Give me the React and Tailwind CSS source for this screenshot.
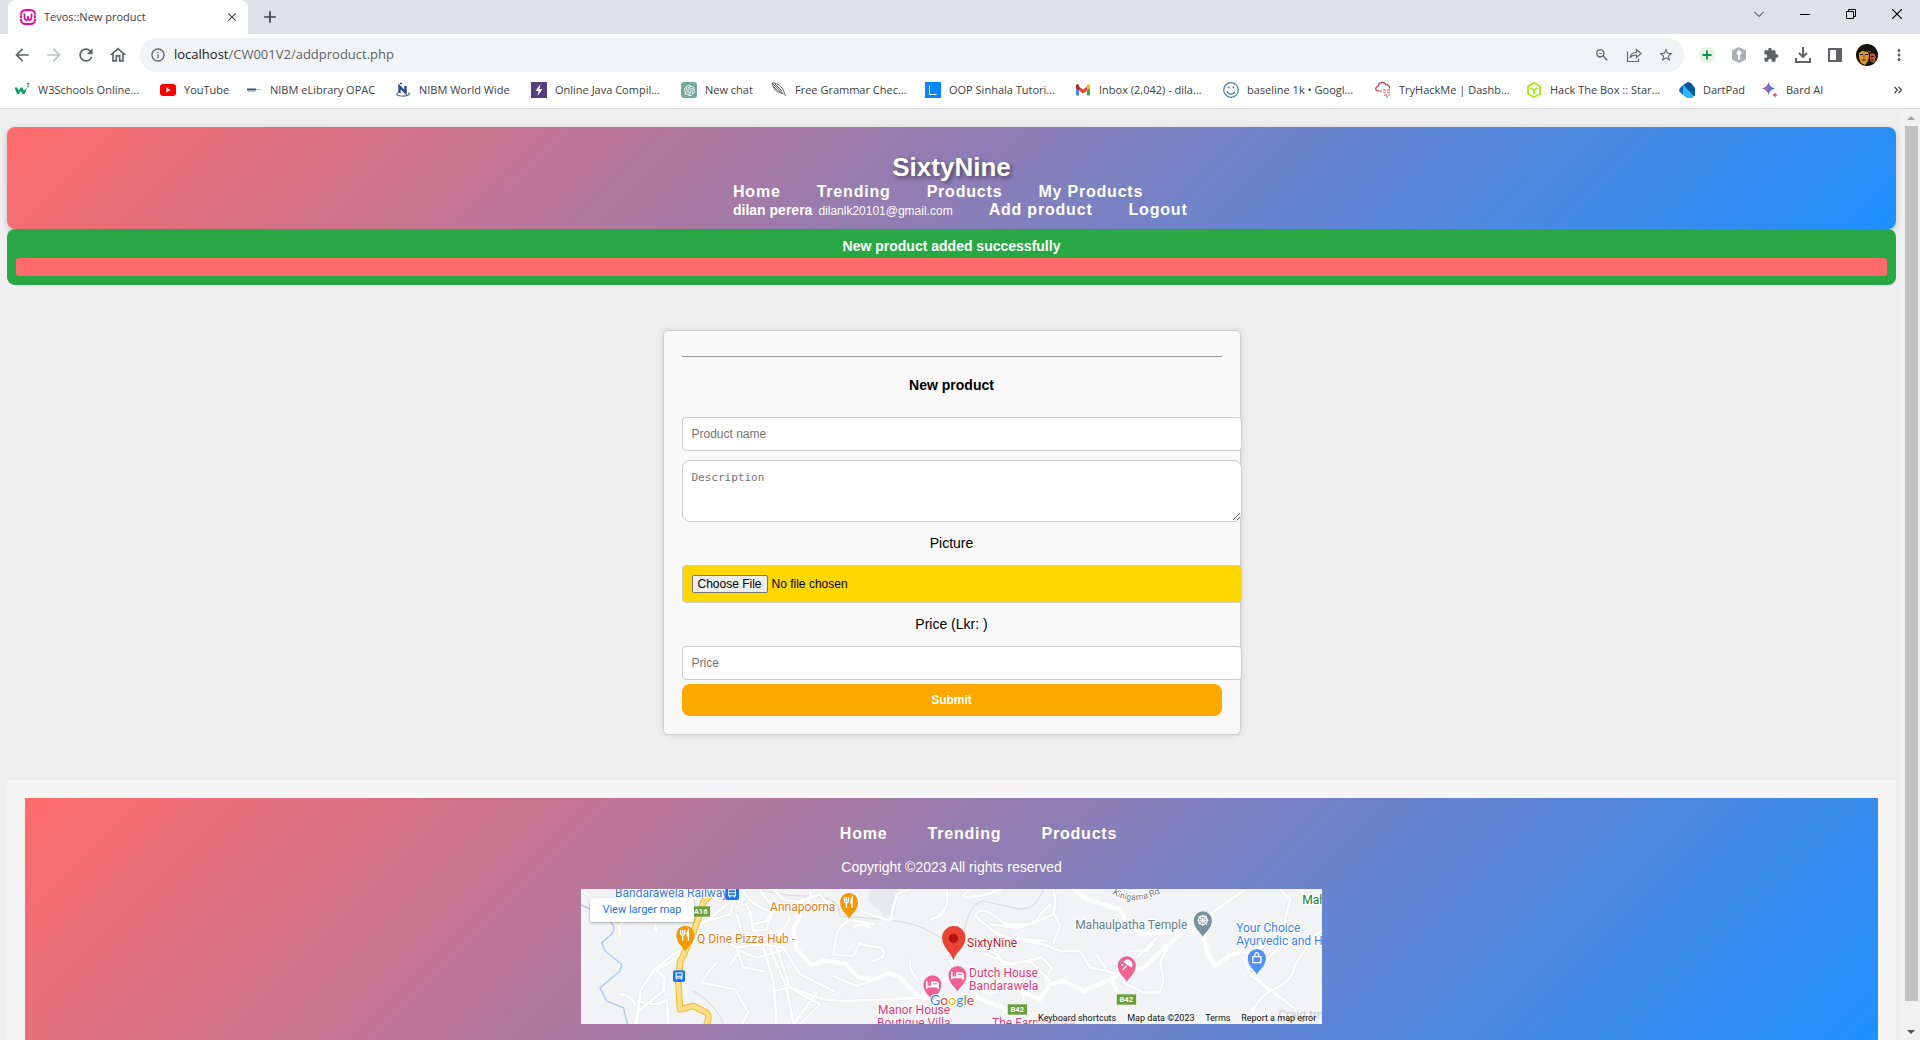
import React from "react";
import {
  MdArrowBack, MdArrowForward, MdRefresh, MdExtension, MdInfoOutline, MdMoreVert,
  MdStarBorder, MdZoomOut, MdClose, MdAdd, MdOutlineHome,
} from "react-icons/md";
import { RiOpenaiFill } from "react-icons/ri";

const GRADIENT = "bg-[linear-gradient(135deg,#ff6b6b,#1e90ff)]";
const NAV_LINK = "text-base leading-[18px] font-bold tracking-wider text-white";

/* ---------- bookmark icons (16 x 16) ---------- */

const Ico = ({ children }) => (
  <svg className="size-4 shrink-0" viewBox="0 0 16 16" fill="none" aria-hidden="true">{children}</svg>
);

const W3Icon = () => (
  <Ico>
    <path d="M.5 5.500h2.700l1.600 3 2-3h1.700l1.200 3 3.300-2.500-2.500 6h-2l-1.700-3-2 3H3z" fill="#0f9d67" />
    <path d="M12.700 1.500h2.300l-1.400 1.500c1.800 0 1.600 2.400-.9 1.900" stroke="#0f9d67" strokeWidth=".9" />
  </Ico>
);
const YouTubeIcon = () => (
  <Ico>
    <rect y="2" width="16" height="12" rx="3" fill="#f00" />
    <path d="M6.300 5.500v5L10.600 8z" fill="#fff" />
  </Ico>
);
const LibraryIcon = () => (
  <Ico>
    <path d="M1 6.500h9v2H1z" fill="#3d4f86" />
    <path d="M2 9.500h7M10 7.500h5" stroke="#b9bfd0" />
  </Ico>
);
const NibmIcon = () => (
  <Ico>
    <path d="M4.500 11V4.500l6 6V4" stroke="#2b4a8f" strokeWidth="2.400" />
    <circle cx="6" cy="1.500" r="1" fill="#34466f" />
    <path d="M3.500 10.500c-2 1-2.500 2.200 0 3 3 .9 7 .8 9.500-.3 2-1 1.500-2 .5-2.500" stroke="#5b6cab" strokeWidth="1.300" />
  </Ico>
);
const BoltIcon = () => (
  <Ico>
    <path d="M0 0h16v16H0z" fill="#563d7c" />
    <path d="M9.500 2L4.500 9h3L6.500 14l5-7h-3z" fill="#fff" />
  </Ico>
);
const ChatIcon = () => (
  <span className="flex size-4 shrink-0 items-center justify-center rounded-[3px] bg-[#74aa9c] text-white">
    <RiOpenaiFill size={13} />
  </span>
);
const QuillIcon = () => (
  <Ico>
    <path d="M1 1c6 0 11 4 12 9l1.500 4M1 1c1 5 4 10 11 10.500M1 1l11.500 11M4 2l7 7M2.500 5l7 5.500" stroke="#444" strokeWidth=".8" />
  </Ico>
);
const LIcon = () => (
  <Ico>
    <path d="M0 0h16v16H0z" fill="#0a84ff" />
    <path d="M4.500 3.500v9h7" stroke="#fff" />
  </Ico>
);
const GmailIcon = () => (
  <Ico>
    <path d="M1 4h3v9.500H2a1 1 0 0 1-1-1z" fill="#4285f4" />
    <path d="M12 4h3v8.500a1 1 0 0 1-1 1h-2z" fill="#34a853" />
    <path d="M4 4.500l4 3 4-3v4l-4 3-4-3z" fill="#ea4335" />
    <path d="M1 4c0-2 2-2 3-1v5.500L1 6z" fill="#c5221f" />
    <path d="M15 4c0-2-2-2-3-1v5.500L15 6z" fill="#fbbc04" />
  </Ico>
);
const SmileIcon = () => (
  <Ico>
    <circle cx="8" cy="8" r="7.300" stroke="#3f7f9c" strokeWidth="1.200" />
    <path d="M4 9.500c1.500 3.500 6.500 3.500 8 0" stroke="#3f7f9c" strokeWidth="1.200" />
    <circle cx="5.500" cy="5.500" r="1" fill="#3f7f9c" />
    <circle cx="10.500" cy="5.500" r="1" fill="#3f7f9c" />
  </Ico>
);
const CloudIcon = () => (
  <Ico>
    <path d="M7 9H3C0 9 0 5 3 4.500c.5-5 7-5 8-1.500 2.500-.5 4 1.500 3.500 3.500" stroke="#cf3038" strokeWidth="1.200" />
    <path d="M8 8h3M12 8h3M8.500 10.500h2M12 10.500h3M9 13h3M13 13h2M11 15h2" stroke="#d98a8f" strokeWidth="1.400" />
  </Ico>
);
const BoxIcon = () => (
  <Ico>
    <path d="M8 1l6 3.300v7.400L8 15l-6-3.300V4.300zM4.500 6L8 8l3.500-2M8 8v4" stroke="#9fef00" strokeWidth="1.800" />
  </Ico>
);
const DartIcon = () => (
  <Ico>
    <path d="M4 3l5-3 3 1 4 5v8h-3z" fill="#01579b" />
    <path d="M4 3l11 11-2 2H8l-4-3z" fill="#29b6f6" />
    <path d="M4 3v10L0 9c0-1 .3-2 1-3z" fill="#0a6ab5" />
  </Ico>
);
const BardIcon = () => (
  <Ico>
    <defs>
      <linearGradient id="bard"><stop stopColor="#d96570" /><stop offset=".5" stopColor="#7a6fd0" /><stop offset="1" stopColor="#2f8ae8" /></linearGradient>
    </defs>
    <path d="M6.500 0c.9 3.600 2.900 5.600 6.500 6.500-3.600.9-5.600 2.900-6.500 6.500C5.600 9.400 3.600 7.400 0 6.500 3.600 5.600 5.600 3.600 6.500 0z" fill="url(#bard)" />
    <path d="M13 10c.5 1.800 1.200 2.500 3 3-1.800.5-2.500 1.200-3 3-.5-1.800-1.200-2.500-3-3 1.800-.5 2.500-1.200 3-3z" fill="#d0607f" />
  </Ico>
);

const BOOKMARKS = [
  { label: "W3Schools Online...", Icon: W3Icon, width: "w-[146px]" },
  { label: "YouTube", Icon: YouTubeIcon, width: "w-[86px]" },
  { label: "NIBM eLibrary OPAC", Icon: LibraryIcon, width: "w-[149px]" },
  { label: "NIBM World Wide", Icon: NibmIcon, width: "w-[136px]" },
  { label: "Online Java Compil...", Icon: BoltIcon, width: "w-[150px]" },
  { label: "New chat", Icon: ChatIcon, width: "w-[90px]" },
  { label: "Free Grammar Chec...", Icon: QuillIcon, width: "w-[154px]" },
  { label: "OOP Sinhala Tutori...", Icon: LIcon, width: "w-[150px]" },
  { label: "Inbox (2,042) - dila...", Icon: GmailIcon, width: "w-[148px]" },
  { label: "baseline 1k • Googl...", Icon: SmileIcon, width: "w-[152px]" },
  { label: "TryHackMe | Dashb...", Icon: CloudIcon, width: "w-[151px]" },
  { label: "Hack The Box :: Star...", Icon: BoxIcon, width: "w-[153px]" },
  { label: "DartPad", Icon: DartIcon, width: "w-[83px]" },
  { label: "Bard AI", Icon: BardIcon, width: "w-[80px]" },
];

/* ---------- browser chrome ---------- */

function TabStrip() {
  return (
    <div className="flex h-[34px] shrink-0 bg-[#dee1e6] pl-2">
      <div className="flex w-[240px] items-center rounded-t-lg bg-white pr-[9px] pl-3 text-[#3c4043]">
        <svg className="size-4 shrink-0" viewBox="0 0 16 16" fill="none" aria-hidden="true">
          <rect x="1" y="1" width="14" height="14" rx="4.500" stroke="#fb009c" strokeWidth="2" />
          <path d="M4.500 4.500v3.500c0 4 3.500 4 3.500 1V7v2c0 3 3.500 3 3.500-1V4.500" stroke="#fb009c" strokeWidth="1.700" />
          <path d="M0 6h1.500M0 9.500h1.500M14.500 6H16M14.500 9.500H16" stroke="#fff" />
        </svg>
        <span className="ml-2 flex-1 text-[11px]">Tevos::New product</span>
        <button type="button" aria-label="Close tab"><MdClose size={14} /></button>
      </div>
      <button type="button" aria-label="New tab" className="ml-3 text-[#3c4043]"><MdAdd size={20} /></button>
      <div className="ml-auto flex h-7 items-center gap-9 pr-[18px]">
        <button type="button" aria-label="Search tabs">
          <svg className="size-[10px]" viewBox="0 0 10 10" fill="none" stroke="#222"><path d="M0 2.500l5 5 5-5" /></svg>
        </button>
        <button type="button" aria-label="Minimize">
          <svg className="size-[10px]" viewBox="0 0 10 10" fill="none" stroke="#000"><path d="M0 5.500h10" /></svg>
        </button>
        <button type="button" aria-label="Restore">
          <svg className="size-[10px]" viewBox="0 0 10 10" fill="none" stroke="#000"><path d="M.5 2.500h7v7h-7zM2.500 2.500v-2h7v7h-2" /></svg>
        </button>
        <button type="button" aria-label="Close window">
          <svg className="size-[10px]" viewBox="0 0 10 10" fill="none" stroke="#000" strokeWidth="1.200"><path d="M0 0l10 10M10 0L0 10" /></svg>
        </button>
      </div>
    </div>
  );
}

function Toolbar() {
  return (
    <div className="flex h-[42px] shrink-0 items-center bg-white pr-[13px] pl-3 text-[#5f6368]">
      <div className="flex w-32 items-center gap-3">
        <button type="button" aria-label="Back"><MdArrowBack size={20} /></button>
        <button type="button" aria-label="Forward" className="text-[#bdc1c6]"><MdArrowForward size={20} /></button>
        <button type="button" aria-label="Reload"><MdRefresh size={20} /></button>
        <button type="button" aria-label="Home page"><MdOutlineHome size={20} /></button>
      </div>
      <div className="flex h-[34px] flex-1 items-center rounded-full bg-[#f1f3f4] px-[10px]">
        <MdInfoOutline size={16} />
        <div className="ml-2 flex-1 text-[13px]">
          <span className="text-[#202124]">localhost</span>/CW001V2/addproduct.php
        </div>
        <div className="flex items-center gap-4">
          <button type="button" aria-label="Zoom"><MdZoomOut size={16} /></button>
          <button type="button" aria-label="Share">
            <svg className="size-4" viewBox="0 0 16 16" fill="none" stroke="currentColor" strokeWidth="1.200">
              <path d="M1.500 4.500v10h11v-3M4 11c.5-4 3-5.500 6.500-5.500V2.500l4.500 4-4.500 4V8C8 8 5.500 8.500 4 11z" />
            </svg>
          </button>
          <button type="button" aria-label="Bookmark"><MdStarBorder size={16} /></button>
        </div>
      </div>
      <div className="ml-[15px] flex items-center gap-4">
        <button type="button" aria-label="Add extension">
          <svg className="size-4" viewBox="0 0 16 16" fill="none"><circle cx="8" cy="8" r="8" fill="#e3f3e2" /><path d="M8 3.500v9M3.500 8h9" stroke="#138a52" strokeWidth="1.800" /></svg>
        </button>
        <button type="button" aria-label="Password extension">
          <svg className="size-4" viewBox="0 0 16 16"><path d="M8 0l7 3.500v9L8 16l-7-3.500v-9z" fill="#a9b0b7" /><circle cx="8" cy="6" r="2.400" fill="#fff" /><path d="M7 7h2v5.500H7z" fill="#fff" /></svg>
        </button>
        <button type="button" aria-label="Extensions"><MdExtension size={16} /></button>
        <button type="button" aria-label="Downloads">
          <svg className="size-4" viewBox="0 0 16 16" fill="none" stroke="currentColor" strokeWidth="2"><path d="M8 0v10M4 6l4 4 4-4M1 11v4h14v-4" /></svg>
        </button>
        <button type="button" aria-label="Side panel">
          <svg className="size-4" viewBox="0 0 16 16" fill="none"><path d="M2 2h12v12H2z" stroke="currentColor" strokeWidth="2" /><path d="M9 2h5v12H9z" fill="currentColor" /></svg>
        </button>
        <button type="button" aria-label="Profile" className="-mx-[3px]">
          <svg className="size-[22px]" viewBox="0 0 22 22">
            <defs><clipPath id="face"><circle cx="11" cy="11" r="11" /></clipPath></defs>
            <g clipPath="url(#face)">
              <path d="M0 0h22v22H0z" fill="#17110d" />
              <path d="M3 9l3-2 6 1 1 4-1 5-3 4-4-2-2-5z" fill="#e09a2b" />
              <path d="M14 10c3-2 6 0 6 3l-2 6-4-2z" fill="#b3582c" />
              <path d="M4 10.500h3M9 10.500h3M6 16h4M15 12.500h3M15 16h2" stroke="#20100a" strokeWidth="1.200" />
              <path d="M8 11v3" stroke="#8a4d12" />
              <path d="M12 7l3 1M18 18l3-2M0 18l4 2" stroke="#3f5a3a" strokeWidth="1.500" />
            </g>
          </svg>
        </button>
        <button type="button" aria-label="Menu" className="-mx-px"><MdMoreVert size={18} /></button>
      </div>
    </div>
  );
}

function BookmarksBar() {
  return (
    <div className="flex h-[33px] shrink-0 items-center border-b border-[#d7d9dc] bg-white pb-1 pl-[14px] text-[11px] text-[#3c4043]">
      {BOOKMARKS.map(({ label, Icon, width }) => (
        <a key={label} href="#" className={"flex shrink-0 items-center gap-2 whitespace-nowrap " + width}>
          <Icon />
          {label}
        </a>
      ))}
      <button type="button" aria-label="More bookmarks" className="mr-[18px] ml-auto">
        <svg className="size-2" viewBox="0 0 8 8" fill="none" stroke="#444" strokeWidth="1.300"><path d="M.5 1l3 3-3 3M4.500 1l3 3-3 3" /></svg>
      </button>
    </div>
  );
}

function Scrollbar() {
  return (
    <div className="flex w-[18px] shrink-0 flex-col items-center bg-[#f1f1f1] pt-[7px] pb-[6px]" aria-hidden="true">
      <svg className="h-1 w-2" viewBox="0 0 8 4"><path d="M0 4l4-4 4 4z" fill="#a3a3a3" /></svg>
      <div className="mt-[6px] mb-[29px] w-[13px] flex-1 bg-[#c1c1c1]" />
      <svg className="h-1 w-2" viewBox="0 0 8 4"><path d="M0 0l4 4 4-4z" fill="#505050" /></svg>
    </div>
  );
}

/* ---------- map ---------- */

const PIN = "M0 0C-5-13-27-24-27-50a27 27 0 0 1 54 0C27-24 5-13 0 0z";

function Pin({ x, y, color, children }) {
  return (
    <g transform={`translate(${x} ${y})`}>
      <path d={PIN} fill={color} />
      <g stroke="#fff" strokeWidth="5" fill="none">{children}</g>
    </g>
  );
}

const Fork = () => <path d="M-8-64v12M-2-64v12M-14-64v10q0 6 6 6 6 0 6-6M-8-48v16M9-32v-32q-6 8-3 18h3" strokeWidth="4" />;
const Bed = () => <path d="M-17-60v23M17-36v-12H-1v-8h12q6 0 6 8M-17-43h34M-9-52h1" />;

const WEST_ROADS = [
  "M260 295q40 10 30 40t-50 40-70 15-20 40M300 360q-60 30-40 60M380 400l100-30 20-70M470 340q-20 20-80 60l-20 60-80 60-40 20-40 60-10 100M250 530l35 30-5 40-75 60-10 40M150 610q30 0 45 30M205 630q60 20 85-5l5 75M250 540l60-50 60-30",
  "M480 300q10 40 50 40l20 60 40-10 20-40 60 10 20-30 60-20 30 40M520 300q20 40 80 60M570 295l40 60-20 60-40 5-10-60M500 370l20 70 50 10 60-20 30-50M470 450l30 20 70-10 70 10 50 80 100 50M480 520l30-40 50 20 70-20M500 470l20 60 60 10M580 470l30 100 10 130M600 470l50 120 20 110M620 470l40 120 90 50-60 60M740 605l-70 95M660 590l-50 10M440 515q-30 30-45 60l100 20 40 70-20 35",
  "M690 360q40-30 30-60M860 310l10 50 90 30 20-80 50-20M800 430q20-50 60-40l50 10M800 430l-10 60 60 5 20-40M870 460l60 10q20 10 5 30l-30 10M650 580q90 50 170 50t230-10M790 555l70 30 60-20M1020 510q-5 20 20 55M1045 620l60-50 30-10M850 410q20-20 50 0",
  "M35 300l20 10M410 310l-30 90M610 295l30 30 60 10",
];
const EAST_ROADS = [
  "M20 295q10 80-50 90M85 300q-30 20 0 20l60-10 40-15M340 295q10 40 0 70l20 40-20 50M110 380q-10-25 30-20l60 40 70 0 70-30M110 380l50 40 40 20 120 10M150 400l80 10q60-10 70-40l30-30M170 430q80 20 140 30l50 20 60 0 30 50 50 10",
  "M110 460l60 30 20 30 80-10 60 60M135 490l80 30 90-20 30 30-20 40M30 510l30 50M240 590l20 60M470 490l30 50 30 10M530 530l40-50 50 0 20-20M550 575l60 30h50l10-40-10-50 30-60M650 440l-60 60M910 300q-30 20-100 70M1020 295l30 30-15 60 5 60-60 60M910 500l20 50 170 130M930 550l60 50q-60 40-55 100M985 600q70-20 80-80l60-90 20-10M1040 440l-70 80-40 35M940 680l-5-30M90 540l-10 50",
];

function MapView() {
  return (
    <svg
      className="block h-[135px] w-full bg-[#f1f3f4]"
      viewBox="0 0 741 135"
      preserveAspectRatio="xMidYMid slice"
      role="img"
      aria-label="Map of Bandarawela"
      fontFamily="Roboto, sans-serif"
    >
      <g transform="translate(-11 -98) scale(.33333)" fill="none" strokeLinejoin="round" strokeLinecap="round">
        <path d="M900 290h85l-10 80-35 5-15-20-30-25z" fill="#e6e8eb" />
        <path d="M30 340l40 20 50 30q20 20 5 40l-30 25 10 25 50 40-5 20-60 50 20 40 50 20 15 60" stroke="#a6c8fb" strokeWidth="4" />
        <path d="M370 600q70 40 90 100M570 295q60 20 150 20t90 60q150 10 200 20t100 45h70q10-100 60-110l90 20q60 20 90-55" stroke="#d5d8db" strokeWidth="3" />
        {WEST_ROADS.map((d) => <path key={d} d={d} stroke="#e3e6e8" strokeWidth="11" />)}
        {WEST_ROADS.map((d) => <path key={d} d={d} stroke="#fff" strokeWidth="8" />)}
        <path d="M690 375l-20 40 10 60 45 48 40-15 60 10 40 40 50 8 40-20 30 10 60 60 30 5 40-50 60-30" stroke="#fff" strokeWidth="13" />
        <path d="M440 290l-40 45-30 90-40 90-5 60 5 80 40-10 40 20q10 10 0 35" stroke="#f7bd3c" strokeWidth="20" />
        <path d="M440 290l-40 45-30 90-40 90-5 60 5 80 40-10 40 20q10 10 0 35" stroke="#fddf8c" strokeWidth="13" />
      </g>
      <g transform="translate(359 -98) scale(.33333)" fill="none" strokeLinejoin="round" strokeLinecap="round">
        {EAST_ROADS.map((d) => <path key={d} d={d} stroke="#e3e6e8" strokeWidth="11" />)}
        {EAST_ROADS.map((d) => <path key={d} d={d} stroke="#fff" strokeWidth="8" />)}
        <path d="M400 290q20 30 70 45t70 20l20 40 50 35 90-10 20-15 70 20 10 60 25 40 40-30 40-15 30 5 50-35M720 430l-110 100-60 10-40 25-80 35-60-30-40 10-30 45-50-20-20-20-80 20-50-15M90 580l20 40 80 30 20 30 40-10M515 565l30 70 60 60" stroke="#fff" strokeWidth="13" />
      </g>

      <g fontSize="12" stroke="#fff" strokeWidth="2" paintOrder="stroke" strokeLinejoin="round">
        <text x="34" y="8" fill="#3b78d8">Bandarawela Railway</text>
        <text x="189" y="22" fill="#d9801f">Annapoorna</text>
        <text x="116" y="54" fill="#d9801f">Q Dine Pizza Hub -</text>
        <text x="386" y="58" fill="#c5221f">SixtyNine</text>
        <text x="388" y="88" fill="#e0397a">Dutch House</text>
        <text x="388" y="101" fill="#e0397a">Bandarawela</text>
        <text x="297" y="125" fill="#e0397a">Manor House</text>
        <text x="296" y="138" fill="#e0397a">Boutique Villa</text>
        <text x="411" y="138" fill="#e0397a">The Farmhouse</text>
        <text x="494" y="40" fill="#607d8b">Mahaulpatha Temple</text>
        <text x="721" y="15" fill="#188038">Mahamevnawa</text>
        <text x="655" y="43" fill="#3b82f6">Your Choice</text>
        <text x="655" y="56" fill="#3b82f6">Ayurvedic and Herbal</text>
        <path id="kinigama" d="M531 5q22 14 52-3" fill="none" stroke="none" />
        <text fontSize="9" fill="#6b7074"><textPath href="#kinigama">Kinigama Rd</textPath></text>
      </g>

      <g transform="translate(-11 -98) scale(.33333)">
        <rect x="365" y="346" width="55" height="31" fill="#689f38" />
        <text x="371" y="370" fontSize="23" fontWeight="700" fill="#fff">A16</text>
        <rect x="466" y="290" width="41" height="37" rx="6" fill="#1a73e8" />
        <path d="M476 296h20v18h-20zM478 320l4-6M495 320l-4-6M476 305h20" stroke="#fff" strokeWidth="3" fill="none" />
        <rect x="309" y="538" width="36" height="35" rx="6" fill="#1a73e8" />
        <path d="M318 546h18v15h-18zM320 566v-4M334 566v-4M318 556h18" stroke="#fff" strokeWidth="3" fill="none" />
        <Pin x={346} y={481} color="#f29900"><Fork /></Pin>
        <Pin x={837} y={383} color="#f29900"><Fork /></Pin>
        <Pin x={1087} y={630} color="#f06292"><Bed /></Pin>
        <Pin x={1162} y={602} color="#f06292"><Bed /></Pin>
        <path d="M1150 508c-6-25-34-38-34-68a35 35 0 0 1 70 0c0 30-30 43-36 68z" fill="#ea4335" />
        <circle cx="1150" cy="442" r="14" fill="#b31412" />
      </g>
      <g transform="translate(359 -98) scale(.33333)">
        <Pin x={788} y={438} color="#78909c">
          <circle cy="-50" r="13" strokeWidth="4" />
          <path d="M0-67v34M-17-50h34M-12-62l24 24M12-62l-24 24" strokeWidth="3" />
        </Pin>
        <Pin x={560} y={573} color="#f06292">
          <path d="M-8-60q10-10 18-2 8 8 4 16zM0-50l-12 14" strokeWidth="4" fill="#fff" />
          <path d="M-17-51h6" />
        </Pin>
        <Pin x={950} y={551} color="#5491f5">
          <path d="M-12-54h24v18h-24zM-6-54q0-12 6-12t6 12" strokeWidth="4" />
        </Pin>
        <rect x="203" y="640" width="58" height="31" fill="#689f38" />
        <text x="211" y="663" fontSize="23" fontWeight="700" fill="#fff">B42</text>
        <rect x="530" y="610" width="58" height="31" fill="#689f38" />
        <text x="538" y="633" fontSize="23" fontWeight="700" fill="#fff">B42</text>
      </g>

      <g fontFamily="Lato, sans-serif" fontSize="14" stroke="#fff" strokeWidth="2" paintOrder="stroke">
        <text x="349" y="116">
          <tspan fill="#4285f4">G</tspan><tspan fill="#ea4335">o</tspan><tspan fill="#fbbc04">o</tspan><tspan fill="#4285f4">g</tspan><tspan fill="#34a853">l</tspan><tspan fill="#ea4335">e</tspan>
        </text>
      </g>

      <rect x="456" y="124" width="285" height="11" fill="#f5f5f5" fillOpacity=".7" />
      <text x="697" y="130" fontSize="12" fill="#c6cace">Craig tmT</text>
      <g fontSize="9" fill="#111">
        <text x="457" y="132">Keyboard shortcuts</text>
        <text x="546" y="132">Map data ©2023</text>
        <text x="624" y="132">Terms</text>
        <text x="660" y="132">Report a map error</text>
      </g>
    </svg>
  );
}

/* ---------- page ---------- */

const FIELD = "block w-[calc(100%+20px)] border border-[#ccc] px-[9px] placeholder:text-[#757575]";

function SiteHeader() {
  return (
    <header className={"rounded-lg pt-[25px] pb-[9px] text-white shadow-[0_2px_6px_rgba(0,0,0,0.2)] " + GRADIENT}>
      <h1 className="text-center text-[26px] leading-[31px] font-bold [text-shadow:2px_2px_4px_rgba(0,0,0,0.5)]">SixtyNine</h1>
      <nav className="mx-auto w-[473px] pl-[18px]">
        <div className="flex gap-9">
          <a href="#" className={NAV_LINK}>Home</a>
          <a href="#" className={NAV_LINK}>Trending</a>
          <a href="#" className={NAV_LINK}>Products</a>
          <a href="#" className={NAV_LINK}>My Products</a>
        </div>
        <div className="flex gap-9 whitespace-nowrap">
          <span className="flex items-baseline gap-1.5 leading-[18px]">
            <b className="text-[14px]">dilan perera</b>
            <span className="text-[12px]">dilanlk20101@gmail.com</span>
          </span>
          <a href="#" className={NAV_LINK}>Add product</a>
          <a href="#" className={NAV_LINK}>Logout</a>
        </div>
      </nav>
    </header>
  );
}

function ProductForm() {
  return (
    <form
      className="mx-auto mt-[45px] w-[578px] rounded-[5px] border border-[#ccc] bg-[#f9f9f9] p-[18px] text-sm text-black shadow-[0_0_9px_rgba(0,0,0,0.12)]"
      onSubmit={(e) => e.preventDefault()}
    >
      <hr className="mt-[7px] border-t border-[#999]" />
      <h2 className="mt-5 text-center leading-[17px] font-bold">New product</h2>
      <input aria-label="Product name" placeholder="Product name" className={"mt-[23px] h-[34px] rounded bg-white text-xs " + FIELD} />
      <textarea
        aria-label="Description"
        placeholder="Description"
        className={"mt-[9px] h-[62px] resize rounded-lg bg-white py-[9px] font-['DejaVu_Sans_Mono',monospace] text-[11px] " + FIELD}
      />
      <label htmlFor="picture" className="mt-[13px] block text-center leading-[17px]">Picture</label>
      <input
        id="picture"
        type="file"
        className={"mt-[13px] h-[38px] rounded bg-[#ffd700] py-[9px] text-xs leading-[18px] file:mr-1 file:h-[18px] file:rounded-[2px] file:border file:border-[#767676] file:bg-[#efefef] file:px-[5px] file:leading-4 " + FIELD}
      />
      <label htmlFor="price" className="mt-[13px] block text-center leading-[17px]">Price (Lkr: )</label>
      <input id="price" placeholder="Price" className={"mt-[13px] h-[34px] rounded bg-white text-xs " + FIELD} />
      <button type="submit" className="mt-1 block h-8 w-full rounded-lg bg-[#ffa900] text-xs font-bold text-white">Submit</button>
    </form>
  );
}

function SiteFooter() {
  return (
    <footer className="mt-[45px] bg-[#f5f5f5] p-[18px]">
      <div className={"pt-[27px] pb-4 text-center text-white " + GRADIENT}>
        <nav className="flex justify-center gap-10 pl-[54px]">
          <a href="#" className={NAV_LINK}>Home</a>
          <a href="#" className={NAV_LINK}>Trending</a>
          <a href="#" className={NAV_LINK}>Products</a>
        </nav>
        <p className="mt-4 text-sm leading-[17px]">Copyright ©2023 All rights reserved</p>
        <div className="relative mx-auto mt-[13px] w-2/5">
          <MapView />
          <a href="#" className="absolute top-[9px] left-[9px] flex h-6 w-[104px] items-center justify-center rounded-[2px] bg-white font-['Roboto',sans-serif] text-[11px] text-[#1a73e8] shadow-[0_1px_3px_rgba(0,0,0,0.3)]">
            View larger map
          </a>
        </div>
      </div>
    </footer>
  );
}

export default function App() {
  return (
    <div className="flex h-screen flex-col overflow-hidden font-['Open_Sans',sans-serif]">
      <TabStrip />
      <Toolbar />
      <BookmarksBar />
      <div className="flex min-h-0 flex-1 bg-[#efefef]">
        <div className="min-w-0 flex-1 overflow-hidden pt-[18px] pr-[6px] pl-[7px] font-['Liberation_Sans',Arial,sans-serif]">
          <SiteHeader />
          <div role="status" className="relative rounded-lg bg-[#28a745] p-[9px] text-center text-sm font-bold text-white">
            <p className="leading-[17px]">New product added successfully</p>
            <div className="mt-[3px] h-[18px] rounded-[3px] bg-[#ff6b6b]" />
          </div>
          <ProductForm />
          <SiteFooter />
        </div>
        <Scrollbar />
      </div>
    </div>
  );
}
